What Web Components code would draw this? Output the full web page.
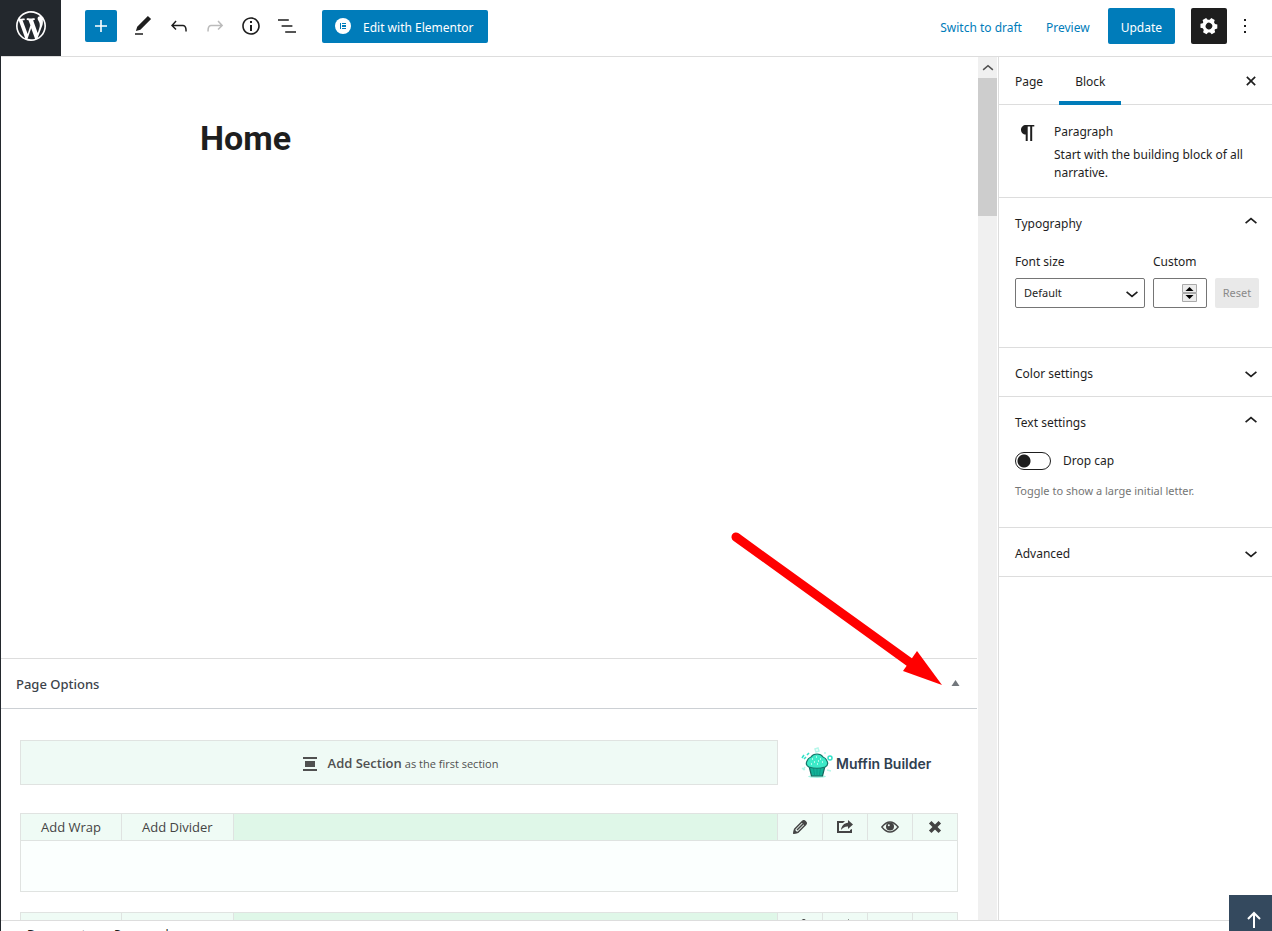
<!DOCTYPE html>
<html lang="en">
<head>
<meta charset="utf-8">
<title>Edit Page</title>
<style>
  html, body { margin: 0; height: 100%; overflow: hidden; background: #fff; }
  body { font: 12px/18px "Noto Sans", "Open Sans", sans-serif; color: #1e1e1e; }
</style>
</head>
<body>
<page-editor></page-editor>
<script>
const define = (name, html, setup) => {
  const template = document.createElement('template');
  template.innerHTML = '<style>*{box-sizing:border-box}button{font:inherit;color:inherit;background:none;border:0;padding:0;margin:0;cursor:pointer}svg{display:block}</style>' + html;
  customElements.define(name, class extends HTMLElement {
    constructor() {
      super();
      this.attachShadow({ mode: 'open' }).append(template.content.cloneNode(true));
    }
    connectedCallback() { if (setup) setup(this, this.shadowRoot); }
  });
};

const icons = {
  wordpress: ['-2 -2 24 24', '<path d="M20 10c0-5.51-4.49-10-10-10C4.48 0 0 4.49 0 10c0 5.52 4.48 10 10 10 5.51 0 10-4.48 10-10zM7.78 15.37L4.37 6.22c.55-.02 1.17-.08 1.17-.08.5-.06.44-1.13-.06-1.11 0 0-1.45.11-2.37.11-.18 0-.37 0-.58-.01C4.12 2.69 6.87 1.11 10 1.11c2.33 0 4.45.87 6.05 2.34-.68-.11-1.65.39-1.65 1.58 0 .74.45 1.36.9 2.1.35.61.55 1.36.55 2.46 0 1.49-1.4 5-1.4 5l-3.03-8.37c.54-.02.82-.17.82-.17.5-.05.44-1.25-.06-1.22 0 0-1.44.12-2.38.12-.87 0-2.33-.12-2.33-.12-.5-.03-.56 1.2-.06 1.22l.92.08 1.26 3.41zM17.41 10c.24-.64.74-1.87.43-4.25.7 1.29 1.05 2.71 1.05 4.25 0 3.29-1.73 6.24-4.4 7.78.97-2.59 1.94-5.2 2.92-7.78zM6.1 18.09C3.12 16.65 1.11 13.53 1.11 10c0-1.3.23-2.48.72-3.59C3.25 10.3 4.67 14.2 6.1 18.09zm4.03-6.63l2.58 6.98c-.86.29-1.76.45-2.71.45-.79 0-1.57-.11-2.29-.33.81-2.38 1.62-4.74 2.42-7.1z"/>'],
  plus: ['0 0 24 24', '<path d="M18 11.2h-5.2V6h-1.6v5.2H6v1.6h5.2V18h1.6v-5.2H18z"/>'],
  pen: ['0 0 24 24', '<path d="M20.1 5.1L16.9 2 6.2 12.7l-1.3 4.4 4.5-1.3L20.1 5.1zM4 20.8h8v-1.5H4v1.5z"/>'],
  undo: ['0 0 24 24', '<path d="M18.3 11.7c-.6-.6-1.4-.9-2.3-.9H6.7l2.9-3.3-1.1-1-4.5 5L8.500 16l1-1-2.700-2.700H16c.5 0 .9.2 1.300.5 1 1 1 3.400 1 4.500v.3h1.500v-.2c0-1.500 0-4.300-1.500-5.700z"/>'],
  redo: ['0 0 24 24', '<path d="M15.600 6.500l-1.100 1 2.900 3.300H8c-.9 0-1.700.3-2.300.9-1.400 1.500-1.400 4.200-1.400 5.600v.2h1.500v-.3c0-1.100 0-3.500 1-4.500.3-.3.7-.5 1.300-.5h9.200L14.500 15l1.100 1.100 4.600-4.600-4.600-5z"/>'],
  info: ['0 0 24 24', '<path d="M12 3.200c-4.800 0-8.800 3.900-8.800 8.800 0 4.800 3.900 8.800 8.800 8.800 4.800 0 8.800-3.900 8.800-8.800 0-4.800-4-8.800-8.800-8.800zm0 16c-4 0-7.200-3.300-7.200-7.200C4.800 8 8 4.800 12 4.800s7.200 3.300 7.200 7.200c0 4-3.200 7.200-7.200 7.200zM11 17h2v-6h-2v6zm0-8h2V7h-2v2z"/>'],
  list: ['0 0 24 24', '<path d="M13.800 5.200H3v1.500h10.800V5.200zm-3.600 12v1.500H21v-1.500H10.200zm7.200-6H6.600v1.500h10.800v-1.500z"/>'],
  cog: ['0 0 24 24', '<g transform="rotate(30 12 12)"><path fill-rule="evenodd" d="M10 4h4l.5 2.300 1.700 1 2.300-.7 2 3.500-1.700 1.600v1l1.700 1.700-2 3.400-2.300-.7-1.700 1L14 20.500h-4l-.5-2.400-1.700-1-2.300.7-2-3.400 1.700-1.700v-1L3.500 10.100l2-3.500 2.300.7 1.700-1zM12 8.800a3.300 3.300 0 1 0 0 6.600 3.300 3.300 0 0 0 0-6.600z"/></g>'],
  dots: ['0 0 24 24', '<path d="M11 5h2v2h-2zM11 11h2v2h-2zM11 17h2v2h-2z"/>'],
  close: ['0 0 24 24', '<path fill="none" stroke="currentColor" stroke-width="2" d="M7 7l10 10M17 7L7 17"/>'],
  para: ['0 0 24 24', '<path d="M19.300 4H10.900c-2.700 0-4.900 2.100-4.900 4.800s2.100 4.700 4.700 4.800V20h2V5.500h2.500V20h2V5.500h2.100z"/>'],
  up: ['0 0 24 24', '<path fill="none" stroke="currentColor" stroke-width="2" d="M5.500 14.500L12 9l6.500 5.500"/>'],
  down: ['0 0 24 24', '<path fill="none" stroke="currentColor" stroke-width="2" d="M5.500 9.500L12 15l6.500-5.500"/>'],
  elementor: ['0 0 16 16', '<circle cx="8" cy="8" r="8"/><path fill="#007cba" d="M5 5h1v6H5zM7 5h4v1H7zM7 7h4v2H7zM7 10h4v1H7z"/>'],
  section: ['0 0 16 16', '<path d="M1 1h14v2H1zM3 5h10v6H3zM1 13h14v2H1z"/>'],
  pencil: ['0 0 16 16', '<path fill="none" stroke="currentColor" stroke-width="1.500" stroke-linejoin="round" d="M2 14l.8-4L10.500 2.300a1.500 1.500 0 0 1 2 0l1.200 1.200a1.500 1.500 0 0 1 0 2L6 13.200zM5 11l6-6"/><path d="M1 15l1-5 4 4zM9.500 3.500l1.700-1.700q1.300-1 2.500.1l.7.8q1 1.200 0 2.300l-1.800 1.700z"/>'],
  share: ['0 0 16 16', '<path d="M8 2H0v12h15v-4l-2 1v1H2V4h4z"/><path d="M11 1l5 4.500-5 4.500V7.500C8 7.300 6 8.500 4 11c.5-4 3-7 7-7.200z"/>'],
  eye: ['0 0 18 16', '<path fill="none" stroke="currentColor" stroke-width="1.300" d="M.8 8q8.200-10 16.400 0-8.200 10-16.400 0z"/><circle cx="9" cy="7.500" r="4"/><circle cx="7.800" cy="6.200" r="1" fill="#effbf5"/>'],
  cross: ['0 0 16 16', '<path fill="none" stroke="currentColor" stroke-width="3.600" d="M3.200 3.200l9.600 9.600M12.800 3.200l-9.600 9.600"/>'],
  muffin: ['0 0 32 32', '<ellipse cx="16" cy="29.500" rx="9" ry="1.500" fill="#a5f3e2"/><path d="M8 19h16l-2.500 10h-11z" fill="#12b297" stroke="#14665d" stroke-width="1.200"/><path d="M12.500 21l1 7M16 21v7M19.500 21l-1 7" stroke="#0a9c87"/><path d="M8 20q-4-2-2-6 1-3 4-4 2-3 6-3t6 3q3 1 4 4 2 4-2 6-8 2.500-16 0z" fill="#3ceac8" stroke="#14776a" stroke-width="1.200"/><path d="M11 12h1M15 10h1M19 12h1M13 15h1M17 14h1M21 15h1M10 17h1M16 17h1" stroke="#cffff3" stroke-width="1.300"/><path d="M1 11l2-3M3 12l2-2M6 8l2-2" fill="none" stroke="#35e2c8" stroke-width="1.600"/><circle cx="29" cy="11" r="2" fill="none" stroke="#35e2c8" stroke-width="1.500"/><path d="M14 2l3-1 1 3-3 1zM1 21l3 2M2 23l2-3M26 23l4 1M23 6h2" fill="none" stroke="#b7f7ea" stroke-width="1.500"/>'],
  arrowUp: ['0 0 20 20', '<path fill="none" stroke="currentColor" stroke-width="2" d="M10 18V3M4 9l6-6 6 6"/>'],
  triUp: ['0 0 8 6', '<path d="M4 0l4 6H0z"/>']
};

define('ui-icon', '<style>:host{display:block;flex:none;width:24px;height:24px}svg{width:100%;height:100%;fill:currentColor}</style><svg aria-hidden="true"></svg>', (el, root) => {
  const [box, body] = icons[el.getAttribute('name')];
  const svg = root.querySelector('svg');
  svg.setAttribute('viewBox', box);
  svg.innerHTML = body;
});

define('editor-header', `
<style>
  :host { display: flex; height: 57px; border-bottom: 1px solid #ddd; justify-content: space-between; }
  .logo { display: grid; place-items: center; width: 60px; height: 56px; padding-bottom: 4px; background: #23282d; color: #fff; }
  .logo ui-icon { width: 36px; height: 36px; }
  .group { display: flex; align-items: center; height: 52px; }
  .tools { gap: 12px; margin-left: 24px; }
  .tools button { color: #1e1e1e; }
  .tools .add { display: grid; place-items: center; width: 32px; height: 32px; margin-right: 2px; border-radius: 2px; background: #007cba; color: #fff; }
  .tools button:disabled { color: #bbb; }
  .left { display: flex; }
  .tools .elementor { display: flex; align-items: center; gap: 12px; height: 33px; margin-left: 11px; padding: 0 14px 0 13px; border-radius: 2px; background: #007cba; color: #fff; }
  .elementor ui-icon { width: 16px; height: 16px; }
  .elementor span, .link span, .update span { padding-top: 3px; display: block; }
  .link { color: #007cba; }
  .actions { padding-right: 15px; }
  .draft { margin-right: 24px; }
  .update { height: 36px; margin: 0 16px 0 18px; padding: 0 13px; border-radius: 2px; background: #007cba; color: #fff; }
  .settings { display: grid; place-items: center; width: 36px; height: 36px; margin-right: 6px; border-radius: 2px; background: #1e1e1e; color: #fff; }
</style>
<div class="left">
  <a class="logo" href="#" aria-label="View pages"><ui-icon name="wordpress"></ui-icon></a>
  <div class="group tools">
    <button class="add" aria-label="Add block"><ui-icon name="plus"></ui-icon></button>
    <button aria-label="Modes"><ui-icon name="pen"></ui-icon></button>
    <button aria-label="Undo"><ui-icon name="undo"></ui-icon></button>
    <button aria-label="Redo" disabled><ui-icon name="redo"></ui-icon></button>
    <button aria-label="Details"><ui-icon name="info"></ui-icon></button>
    <button aria-label="Outline"><ui-icon name="list"></ui-icon></button>
    <button class="elementor"><ui-icon name="elementor"></ui-icon><span>Edit with Elementor</span></button>
  </div>
</div>
<div class="group actions">
  <button class="link draft"><span>Switch to draft</span></button>
  <button class="link"><span>Preview</span></button>
  <button class="update"><span>Update</span></button>
  <button class="settings" aria-label="Settings"><ui-icon name="cog"></ui-icon></button>
  <button aria-label="Options"><ui-icon name="dots"></ui-icon></button>
</div>`);

define('scroll-bar', `
<style>
  :host { display: block; width: 19px; margin-right: 1px; background: #f0f0f0; color: #505050; }
  .cap { display: grid; place-items: center; height: 21px; }
  ui-icon { width: 18px; height: 18px; }
  .thumb { height: 138px; background: #cdcdcd; }
</style>
<div class="cap"><ui-icon name="up"></ui-icon></div><div class="thumb"></div>`);

define('builder-section', `
<style>
  :host { display: block; border: 1px solid #e0e3e1; background: #fbfffe; color: #444; font: 13px/26px "Open Sans", sans-serif; }
  .bar { display: flex; height: 27px; background: #dff7e8; border-bottom: 1px solid #dfe3e1; }
  button { background: #effbf5; border-right: 1px solid #dfe3e1; padding: 0 20px; }
  .tool { display: grid; place-items: center; width: 45px; padding: 0; border-right: 0; border-left: 1px solid #dfe3e1; }
  .space { flex: 1; }
  .tool ui-icon { width: 16px; height: 16px; }
  .tool ui-icon[name=eye] { width: 18px; }
  .body { height: 50px; }
</style>
<div class="bar">
  <button>Add Wrap</button><button>Add Divider</button><div class="space"></div>
  <button class="tool" aria-label="Edit"><ui-icon name="pencil"></ui-icon></button>
  <button class="tool" aria-label="Export"><ui-icon name="share"></ui-icon></button>
  <button class="tool" aria-label="Hide"><ui-icon name="eye"></ui-icon></button>
  <button class="tool" aria-label="Delete"><ui-icon name="cross"></ui-icon></button>
</div>
<div class="body"></div>`);

define('muffin-builder', `
<style>
  :host { display: grid; gap: 20px; padding: 31px 20px 0 19px; }
  .top { display: flex; margin-bottom: 8px; }
  .add { flex: 1; display: flex; align-items: center; justify-content: center; height: 45px; padding: 2px 0 0 2px; border: 1px solid #e0e3e1; background: #effaf5; color: #505050; font: 11px/20px "Open Sans", sans-serif; }
  .add ui-icon { width: 16px; height: 16px; margin-right: 10px; }
  .add strong { font-size: 13px; font-weight: 600; margin-right: 3px; }
  .add .label { display: flex; align-items: baseline; }
  .brand { display: flex; align-items: center; gap: 3px; width: 180px; padding-left: 23px; color: #304050; font: 600 14px/20px Inter, sans-serif; }
  .brand ui-icon { width: 32px; height: 32px; }
  .brand span { padding-top: 2px; }
</style>
<div class="top">
  <button class="add"><ui-icon name="section"></ui-icon><span class="label"><strong>Add Section</strong><span>as the first section</span></span></button>
  <div class="brand"><ui-icon name="muffin"></ui-icon><span>Muffin Builder</span></div>
</div>
<builder-section></builder-section>
<builder-section></builder-section>`);

define('meta-box', `
<style>
  :host { display: block; border-top: 1px solid #ddd; margin-right: 1px; }
  header { position: relative; display: flex; align-items: center; justify-content: space-between; height: 50px; padding: 0 17px 0 15px; border-bottom: 1px solid #ccd0d4; }
  h2 { margin: 0; font-size: 13px; line-height: 20px; font-weight: 500; color: #3c434a; }
  button { color: #72777c; padding-bottom: 2px; }
  button ui-icon { width: 9px; height: 6px; }
  .pointer { position: absolute; right: 34px; bottom: 22px; width: 212px; height: 156px; pointer-events: none; }
  .content { margin-right: -1px; }
</style>
<header>
  <h2><slot name="title"></slot></h2>
  <button aria-label="Toggle panel"><ui-icon name="triUp"></ui-icon></button>
  <svg class="pointer" viewBox="0 0 212 156" aria-hidden="true"><path d="M5 7l176 127" stroke="red" stroke-width="9" stroke-linecap="round"/><path d="M211 155l-25-34-14 20z" fill="red"/></svg>
</header>
<div class="content"><slot></slot></div>`);

define('side-panel', `
<style>
  :host { display: block; border-bottom: 1px solid #ddd; }
  button { display: flex; width: 100%; height: 48px; align-items: center; justify-content: space-between; padding: 3px 11px 0 16px; }
  ui-icon { width: 20px; height: 20px; }
  ui-icon[name=up] { margin-bottom: 6px; }
  h2 { margin: 0; font: inherit; }
</style>
<h2><button><span></span></button></h2><slot></slot>`, (el, root) => {
  const button = root.querySelector('button');
  const icon = document.createElement('ui-icon');
  icon.setAttribute('name', el.hasAttribute('open') ? 'up' : 'down');
  root.querySelector('span').textContent = el.getAttribute('heading');
  button.append(icon);
  button.setAttribute('aria-expanded', el.hasAttribute('open'));
});

define('editor-sidebar', `
<style>
  :host { display: block; border-left: 1px solid #ddd; background: #fff; }
  .tabs { display: flex; height: 48px; border-bottom: 1px solid #ddd; padding-right: 11px; align-items: stretch; }
  .tabs button { padding: 2px 16px 0; }
  .tabs .active { box-shadow: inset 0 -4px #007cba; margin-bottom: -1px; padding-bottom: 1px; }
  .tabs .close { margin-left: auto; padding: 0; }
  .close ui-icon { width: 20px; height: 20px; }
  .card { display: flex; gap: 15px; padding: 16px 16px 15px; border-bottom: 1px solid #ddd; }
  .card h2 { margin: 2px 0 5px; font: inherit; }
  .card p { margin: 0; }
  .fields { display: grid; grid-template-columns: 130px 54px 44px; gap: 7px 8px; padding: 7px 13px 39px 16px; align-items: center; }
  select, input[type=number] { width: 100%; height: 30px; margin: 0; border: 1px solid #757575; border-radius: 2px; background: #fff; color: #1e1e1e; font: 11px/18px "Noto Sans", sans-serif; appearance: none; -moz-appearance: textfield; padding: 0 8px; }
  input::-webkit-inner-spin-button { appearance: none; margin: 0; }
  .pick { position: relative; }
  .pick ui-icon { position: absolute; right: 3px; top: 6px; width: 20px; height: 20px; pointer-events: none; }
  .pick .spin { position: absolute; right: 10px; top: 6px; pointer-events: none; }
  .reset { height: 30px; border-radius: 2px; background: #e9e9e9; color: #8a8a8a; font-size: 11px; }
  .toggle { display: flex; align-items: center; gap: 12px; padding: 7px 16px 0; }
  .toggle input { appearance: none; width: 36px; height: 18px; margin: 0; border: 1px solid #1e1e1e; border-radius: 9px; background: radial-gradient(circle at 8px 8px, #1e1e1e 6px, transparent 7px); }
  .help { margin: 0; padding: 12px 16px 27px; font-size: 11px; color: #757575; }
</style>
<div class="tabs"><button>Page</button><button class="active">Block</button><button class="close" aria-label="Close settings"><ui-icon name="close"></ui-icon></button></div>
<div class="card"><ui-icon name="para"></ui-icon><div><h2>Paragraph</h2><p>Start with the building block of all narrative.</p></div></div>
<side-panel heading="Typography" open>
  <div class="fields">
    <label for="size">Font size</label><label for="custom">Custom</label><span></span>
    <div class="pick"><select id="size"><option>Default</option></select><ui-icon name="down"></ui-icon></div>
    <div class="pick"><input id="custom" type="number"><svg class="spin" width="15" height="18" viewBox="0 0 15 18" aria-hidden="true"><path fill="#ececec" stroke="#aaa" d="M.5.5h14v8H.5zM.5 9.500h14v8H.5z"/><path d="M7.500 3l4 4h-8zM7.500 15l-4-4h8z"/></svg></div>
    <button class="reset" disabled>Reset</button>
  </div>
</side-panel>
<side-panel heading="Color settings"></side-panel>
<side-panel heading="Text settings" open>
  <div class="toggle"><input id="cap" type="checkbox" role="switch" aria-describedby="help"><label for="cap">Drop cap</label></div>
  <p class="help" id="help">Toggle to show a large initial letter.</p>
</side-panel>
<side-panel heading="Advanced"></side-panel>`);

define('page-editor', `
<style>
  :host { display: grid; grid-template: 57px minmax(0, 1fr) 25px / minmax(0, 1fr) 20px 274px; height: calc(100vh + 14px); border-left: 1px solid #23282d; }
  editor-header, footer { grid-column: 1 / -1; }
  main { display: flex; flex-direction: column; overflow: hidden; }
  .canvas { flex: 1; padding: 59px 199px 0; }
  h1 { margin: 0; font: 700 34px/44px Roboto, sans-serif; }
  .boxes { flex: none; height: 262px; }
  footer { border-top: 1px solid #ddd; padding: 4px 26px 0; display: flex; gap: 8px; line-height: 20px; background: #fff; }
  .top { position: fixed; right: -7px; bottom: -14px; width: 50px; height: 50px; display: grid; place-items: center; background: #34495e; color: #fff; }
  .top ui-icon { width: 20px; height: 20px; }
</style>
<editor-header></editor-header>
<main>
  <div class="canvas"><h1>Home</h1></div>
  <div class="boxes"><meta-box><span slot="title">Page Options</span><muffin-builder></muffin-builder></meta-box></div>
</main>
<scroll-bar></scroll-bar>
<editor-sidebar></editor-sidebar>
<footer><button>Document</button><span aria-hidden="true">→</span><span>Paragraph</span></footer>
<a class="top" href="#" aria-label="Back to top"><ui-icon name="arrowUp"></ui-icon></a>`);
</script>
</body>
</html>
